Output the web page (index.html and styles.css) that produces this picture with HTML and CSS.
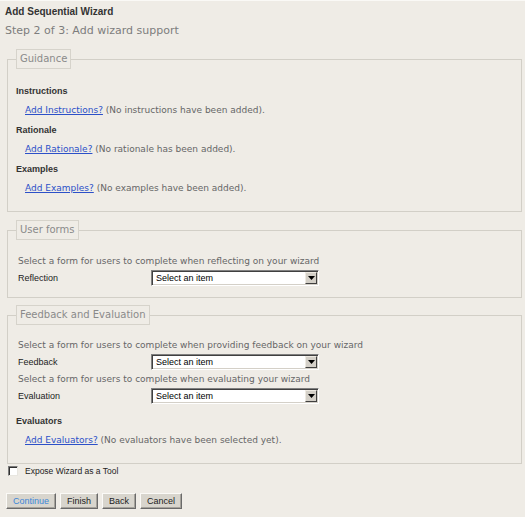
FILE: index.html
```html
<!DOCTYPE html>
<html>
<head>
<meta charset="utf-8">
<link rel="stylesheet" href="styles.css">
</head>
<body>
<div class="page">
  <h1 class="title">Add Sequential Wizard</h1>
  <h2 class="step">Step 2 of 3: Add wizard support</h2>

  <fieldset class="box guidance">
    <legend>Guidance</legend>
    <div class="label">Instructions</div>
    <div class="linkrow"><a href="#">Add Instructions?</a> (No instructions have been added).</div>
    <div class="label">Rationale</div>
    <div class="linkrow"><a href="#">Add Rationale?</a> (No rationale has been added).</div>
    <div class="label">Examples</div>
    <div class="linkrow"><a href="#">Add Examples?</a> (No examples have been added).</div>
  </fieldset>

  <fieldset class="box forms">
    <legend>User forms</legend>
    <div class="hint">Select a form for users to complete when reflecting on your wizard</div>
    <div class="field">
      <span class="flabel">Reflection</span>
      <span class="select"><span class="val">Select an item</span><span class="arrow"><svg width="7" height="4" viewBox="0 0 7 4"><polygon points="0,0 7,0 3.5,4" fill="#000"/></svg></span></span>
    </div>
  </fieldset>

  <fieldset class="box feedback">
    <legend>Feedback and Evaluation</legend>
    <div class="hint">Select a form for users to complete when providing feedback on your wizard</div>
    <div class="field">
      <span class="flabel">Feedback</span>
      <span class="select"><span class="val">Select an item</span><span class="arrow"><svg width="7" height="4" viewBox="0 0 7 4"><polygon points="0,0 7,0 3.5,4" fill="#000"/></svg></span></span>
    </div>
    <div class="hint">Select a form for users to complete when evaluating your wizard</div>
    <div class="field">
      <span class="flabel">Evaluation</span>
      <span class="select"><span class="val">Select an item</span><span class="arrow"><svg width="7" height="4" viewBox="0 0 7 4"><polygon points="0,0 7,0 3.5,4" fill="#000"/></svg></span></span>
    </div>
    <div class="label eval">Evaluators</div>
    <div class="linkrow short"><a href="#">Add Evaluators?</a> (No evaluators have been selected yet).</div>
  </fieldset>

  <div class="check"><span class="cb"></span><span class="cbtext">Expose Wizard as a Tool</span></div>

  <div class="buttons">
    <button class="btn primary">Continue</button>
    <button class="btn">Finish</button>
    <button class="btn">Back</button>
    <button class="btn">Cancel</button>
  </div>
</div>
</body>
</html>
```

FILE: styles.css
```css
html, body {
  margin: 0;
  padding: 0;
}
body {
  background: #efece6;
  border-top: 1px solid #faf9f6;
  width: 525px;
  height: 516px;
  overflow: hidden;
}
.page {
  padding: 4px 3px 0 5px;
}
.title {
  margin: 0;
  font: bold 10px/14px "Liberation Sans", Arial, sans-serif;
  color: #333;
}
.step {
  margin: 4px 0 0;
  font: normal 11px/16px "DejaVu Sans", Verdana, sans-serif;
  color: #7d7d7d;
}
.box {
  margin: 10px 0 0 2px;
  border: 1px solid #d2cfc7;
  padding: 12px 8px 13px 8px;
  min-width: 0;
}
.box legend {
  padding: 0 3px;
  margin: 0;
  border: 1px solid #d6d3cb;
  font: normal 10px/18px "DejaVu Sans", Verdana, sans-serif;
  color: #8a8a8a;
}
.forms {
  margin-top: 8px;
  padding-bottom: 11px;
}
.feedback {
  margin-top: 7px;
  padding-top: 11px;
  padding-bottom: 14px;
}
.label {
  height: 20px;
  font: bold 9px/20px "Liberation Sans", Arial, sans-serif;
  color: #333;
}
.label.eval {
  margin-top: 7px;
}
.linkrow {
  height: 19px;
  padding-left: 9px;
  font: normal 9px/19px "DejaVu Sans", Verdana, sans-serif;
  color: #666;
}
.linkrow.short {
  height: 18px;
  line-height: 18px;
}
.linkrow a {
  color: #2c50c8;
  text-decoration: underline;
}
.hint {
  height: 18px;
  padding-left: 2px;
  font: normal 9px/18px "DejaVu Sans", Verdana, sans-serif;
  color: #666;
}
.field {
  display: flex;
  align-items: center;
  height: 16px;
  padding-left: 2px;
}
.flabel {
  width: 133px;
  font: normal 9px/16px "Liberation Sans", Arial, sans-serif;
  color: #222;
}
.select {
  display: flex;
  align-items: stretch;
  box-sizing: border-box;
  width: 168px;
  height: 16px;
  background: #fff;
  border: 1px solid;
  border-color: #808080 #fff #fff #808080;
  box-shadow: inset 1px 1px 0 #404040, inset -1px -1px 0 #d4d0c8;
  padding: 1px;
}
.val {
  flex: 1;
  padding-left: 3px;
  font: normal 9px/12px "Liberation Sans", Arial, sans-serif;
  color: #000;
}
.arrow {
  display: flex;
  align-items: center;
  justify-content: center;
  box-sizing: border-box;
  width: 12px;
  background: #d4d0c8;
  border: 1px solid;
  border-color: #eeeae2 #404040 #404040 #eeeae2;
}
.check {
  display: flex;
  align-items: center;
  height: 12px;
  margin-top: 1px;
  margin-left: 3px;
}
.cb {
  box-sizing: border-box;
  width: 10px;
  height: 10px;
  background: #fff;
  border: 1px solid;
  border-color: #7a7a7a #e8e6e0 #e8e6e0 #7a7a7a;
  box-shadow: inset 1px 1px 0 #303030;
}
.cbtext {
  margin-left: 7px;
  font: normal 8.5px/12px "Liberation Sans", Arial, sans-serif;
  color: #222;
}
.buttons {
  display: flex;
  gap: 4px;
  margin-top: 16px;
  margin-left: 1px;
}
.btn {
  box-sizing: border-box;
  height: 16px;
  padding: 0 6px;
  margin: 0;
  background: #d8d5cd;
  border: 1px solid;
  border-color: #fbfaf7 #6a6a6a #6a6a6a #fbfaf7;
  box-shadow: inset -1px -1px 0 #a5a29b;
  font: normal 9px/12px "Liberation Sans", Arial, sans-serif;
  color: #222;
}
.btn.primary {
  color: #3d86d8;
}
```
